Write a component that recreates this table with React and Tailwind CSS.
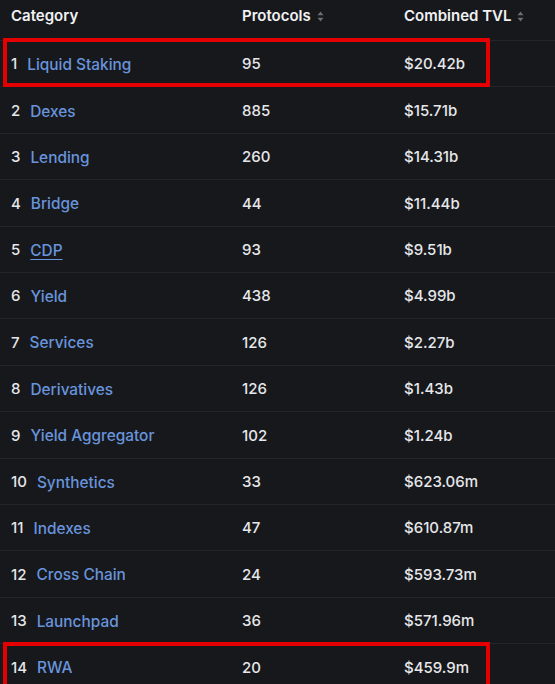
import React from 'react';

const rows = [
    { name: 'Liquid Staking', protocols: 95, tvl: '$20.42b', mark: true },
    { name: 'Dexes', protocols: 885, tvl: '$15.71b' },
    { name: 'Lending', protocols: 260, tvl: '$14.31b' },
    { name: 'Bridge', protocols: 44, tvl: '$11.44b' },
    { name: 'CDP', protocols: 93, tvl: '$9.51b', hover: true },
    { name: 'Yield', protocols: 438, tvl: '$4.99b' },
    { name: 'Services', protocols: 126, tvl: '$2.27b' },
    { name: 'Derivatives', protocols: 126, tvl: '$1.43b' },
    { name: 'Yield Aggregator', protocols: 102, tvl: '$1.24b' },
    { name: 'Synthetics', protocols: 33, tvl: '$623.06m' },
    { name: 'Indexes', protocols: 47, tvl: '$610.87m' },
    { name: 'Cross Chain', protocols: 24, tvl: '$593.73m' },
    { name: 'Launchpad', protocols: 36, tvl: '$571.96m' },
    { name: 'RWA', protocols: 20, tvl: '$459.9m', mark: true },
];

const SortIcon = () => (
    <svg width="7" height="11" viewBox="0 0 7 11" className="ml-[6px] mt-[1px]">
        <path d="M3.5 0.5 L6.5 4.2 H0.5 Z" fill="#6b6e76" />
        <path d="M3.5 10.5 L6.5 6.8 H0.5 Z" fill="#6b6e76" />
    </svg>
);

export default function App() {
    return (
        <div
            className="relative w-[555px] h-[684px] overflow-hidden bg-[#17181c] text-[15px] text-[#e6e7ea]"
            style={{ fontFamily: 'Inter, "Noto Sans", sans-serif' }}
        >
            <div className="grid grid-cols-[231px_162px_1fr] h-[40px] items-start pt-[5px] font-semibold text-[#f1f2f4]">
                <div className="pl-[11px]">Category</div>
                <div className="pl-[11px] flex items-center">Protocols<SortIcon /></div>
                <div className="pl-[11px] flex items-center">Combined TVL<SortIcon /></div>
            </div>
            {rows.map((r, i) => (
                <div
                    key={r.name}
                    className="grid grid-cols-[231px_162px_1fr] h-[46.4px] items-center pt-[2px] border-t border-[#24252a] font-medium"
                >
                    <div className="pl-[11px] flex items-center gap-[10px]">
                        <span>{i + 1}</span>
                        <span className={`text-[15.4px] text-[#6894dc] ${r.hover ? 'underline underline-offset-[3px]' : ''}`}>{r.name}</span>
                    </div>
                    <div className="pl-[11px]">{r.protocols}</div>
                    <div className="pl-[11px]">{r.tvl}</div>
                </div>
            ))}
            <div className="absolute left-[3px] top-[38px] w-[487px] h-[49px] border-4 border-[#e40000]" />
            <div className="absolute left-[3px] top-[642px] w-[487px] h-[60px] border-4 border-[#e40000]" />
        </div>
    );
}
